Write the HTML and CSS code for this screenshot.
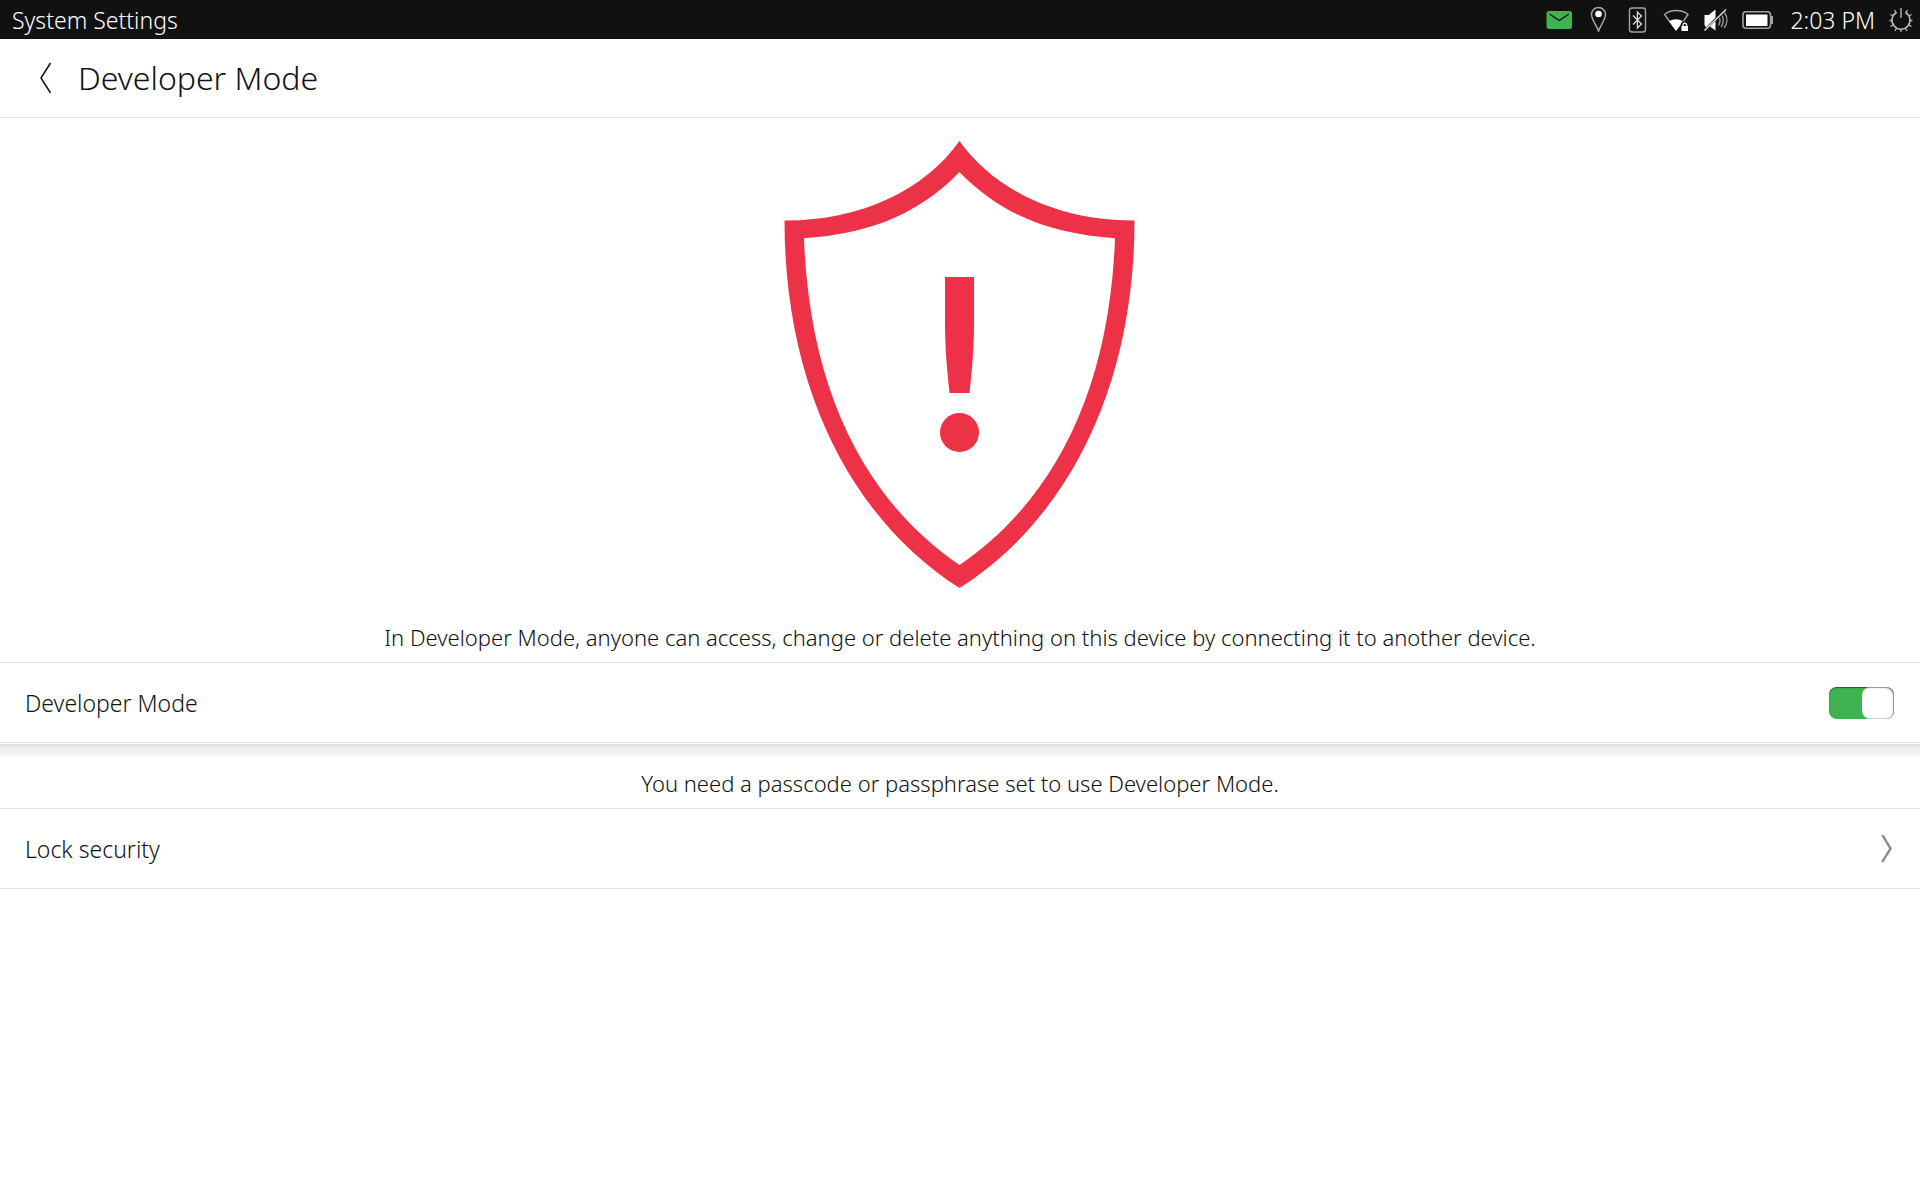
FILE: index.html
```
<!DOCTYPE html>
<html lang="en">
<head>
<meta charset="utf-8">
<meta name="viewport" content="width=device-width, initial-scale=1">
<title>System Settings</title>
<link rel="stylesheet" href="styles.css">
</head>
<body>
<div class="panel">
  <span class="panel-title">System Settings</span>
  <div class="indicators">
    <svg class="indicator" viewBox="0 0 27 39" aria-label="Messages" role="img">
      <rect x="0.500" y="11" width="25.500" height="18" rx="2.500" fill="#3eb34f"/>
      <path d="M3.500 14L13.200 20.500L23 14" fill="none" stroke="#111" stroke-width="1.400"/>
    </svg>
    <svg class="indicator" viewBox="0 0 27 39" aria-label="Location" role="img">
      <path d="M13.500 31.500C12 25.500 6.500 20 6.500 14.500A7 7 0 0 1 20.500 14.500C20.500 20 15 25.500 13.500 31.500Z" fill="none" stroke="#a4a4a4" stroke-width="1.500"/>
      <circle cx="13.500" cy="14" r="3.300" fill="#fff"/>
    </svg>
    <svg class="indicator" viewBox="0 0 27 39" aria-label="Bluetooth" role="img">
      <rect x="5.500" y="8" width="16" height="24" rx="2.500" fill="none" stroke="#a4a4a4" stroke-width="1.400"/>
      <path d="M9 15.500L17.500 24L13.400 28V12L17.500 16L9 24.500" fill="none" stroke="#ddd" stroke-width="1.300"/>
    </svg>
    <svg class="indicator" viewBox="0 0 27 39" aria-label="Wi-Fi" role="img">
      <path d="M7 22L1.500 14.500C8 9.300 18.500 9.300 25 14.500L20.500 21" fill="none" stroke="#a4a4a4" stroke-width="1.500"/>
      <path d="M13 31L6 21.500C10 18.400 16 18.400 20 21.500C18.500 22 17.800 23.500 17.500 25L16.500 26.500Z" fill="#fff"/>
      <rect x="18.500" y="26" width="6.500" height="5" fill="#fff"/>
      <path d="M20 26.500V25A1.800 1.800 0 0 1 23.600 25V26.500" fill="none" stroke="#fff" stroke-width="1.200"/>
    </svg>
    <svg class="indicator" viewBox="0 0 27 39" aria-label="Sound muted" role="img">
      <path d="M2.500 15H6.500L13.500 9.500V17.500L4 27.500L2.500 25ZM13.500 21V30.500L8 26.500Z" fill="#fff"/>
      <path d="M2.500 30.500L24 9.500" stroke="#ddd" stroke-width="1.500"/>
      <path d="M17.500 18C18.300 20 18 23 16.500 25.500M20 15.500C22 19 21.500 24 19 27M22.500 12.500C26 17.500 25.500 23.500 22 28" fill="none" stroke="#999" stroke-width="1.400"/>
    </svg>
    <svg class="indicator battery" viewBox="0 0 33 39" aria-label="Battery full" role="img">
      <rect x="2" y="11.700" width="27.500" height="16.600" rx="3" fill="none" stroke="#a4a4a4" stroke-width="1.600"/>
      <rect x="29.500" y="16" width="2.500" height="8" fill="#a4a4a4"/>
      <rect x="5" y="14.500" width="21.500" height="11.500" fill="#fff"/>
    </svg>
    <time class="clock" datetime="14:03">2:03 PM</time>
    <svg class="indicator" viewBox="0 0 27 39" aria-label="Session" role="img">
      <path d="M9.500 12.500A9 9 0 1 0 18.500 12.500" fill="none" stroke="#bbb" stroke-width="1.500"/>
      <path d="M14 8V18" stroke="#999" stroke-width="1.700"/>
      <path d="M9.500 13L7.500 10M18.500 13L20.500 10M6 16L3.500 14.500M22 16L24.500 14.500M5 20.500H2.500M23 20.500H25.500M6 25L3.500 26.500M22 25L24.500 26.500M9.500 28.300L8 31M18.500 28.300L20 31M14 29.500V32" stroke="#bbb" stroke-width="1.300"/>
    </svg>
  </div>
</div>

<header class="page-header">
  <button class="back" type="button" aria-label="Back">
    <svg class="back-icon" viewBox="0 0 12 32" aria-hidden="true">
      <path d="M10.500 1L1 16L10.500 31" fill="none" stroke="#111" stroke-width="1.500"/>
    </svg>
  </button>
  <h1 class="page-title">Developer Mode</h1>
</header>

<main>
  <svg class="shield" viewBox="0 0 352 447" role="img" aria-label="Warning">
    <path fill-rule="evenodd" d="M175.500 0C140 50 75 80 0.500 79.500C0.500 250 70 380 175.500 447C281 380 350.500 250 350.500 79.500C276 80 211 50 175.500 0ZM175.500 31C221 78 273 93 331 97.300C325 262 261 366 175.500 424C90 366 26 262 20 97.300C78 93 130 78 175.500 31Z"/>
    <path d="M161 136H190V180C190 208 188 228 185.500 252H165.500C163 228 161 208 161 180Z"/>
    <circle cx="175.500" cy="291.500" r="19.500"/>
  </svg>
  <p class="note">In Developer Mode, anyone can access, change or delete anything on this device by connecting it to another device.</p>
  <label class="row" for="developer-mode">
    <span>Developer Mode</span>
    <input class="switch" id="developer-mode" type="checkbox" role="switch" checked>
  </label>
  <div class="divider"></div>
  <p class="note">You need a passcode or passphrase set to use Developer Mode.</p>
  <a class="row" href="#lock-security">
    <span>Lock security</span>
    <svg class="chevron" viewBox="0 0 13 28" aria-hidden="true">
      <path d="M1.300 0L9.500 13.500L1.300 27" fill="none" stroke="#888" stroke-width="2.400"/>
    </svg>
  </a>
</main>
</body>
</html>
```
FILE: styles.css
```
* {
  box-sizing: border-box;
}

body {
  margin: 0;
  background: #fff;
  color: #111;
  font-family: "Noto Sans", "Open Sans", sans-serif;
  font-size: 23px;
  font-weight: 300;
  line-height: 32px;
}

.panel {
  display: flex;
  align-items: center;
  justify-content: space-between;
  height: 39px;
  padding: 0 6px 0 12px;
  background: #111;
  color: #fff;
}

.indicators {
  display: flex;
  align-items: center;
  gap: 12px;
}

.indicator {
  display: block;
  width: 27px;
  height: 39px;
}

.battery {
  width: 33px;
}

.clock {
  margin-left: 4px;
}

.page-header {
  display: flex;
  align-items: center;
  height: 79px;
  padding-left: 28px;
  border-bottom: 1px solid #e2e2e2;
}

.back {
  display: flex;
  align-items: center;
  justify-content: center;
  width: 36px;
  height: 48px;
  padding: 0;
  border: 0;
  background: none;
}

.back-icon {
  width: 12px;
  height: 32px;
}

.page-title {
  margin: 0 0 0 14px;
  font-size: 32px;
  font-weight: 300;
  line-height: 46px;
}

.shield {
  display: block;
  width: 352px;
  height: 447px;
  margin: 23px auto 24px;
  fill: #ed3146;
}

.note {
  margin: 0;
  padding: 10px 16px;
  border-bottom: 1px solid #e2e2e2;
  font-size: 22px;
  line-height: 30px;
  text-align: center;
}

.row {
  display: flex;
  align-items: center;
  justify-content: space-between;
  min-height: 80px;
  padding: 0 26px 0 25px;
  border-bottom: 1px solid #e2e2e2;
  color: inherit;
  text-decoration: none;
}

.switch {
  appearance: none;
  display: flex;
  width: 65px;
  height: 32px;
  margin: 0;
  border-radius: 8px;
  background: #c8c8c8;
  box-shadow: inset 0 1px 1px #00000080;
}

.switch::before {
  content: "";
  width: 32px;
  border-radius: 8px;
  background: #fff;
  box-shadow: inset -1px 1px 1px #00000070, inset 0 -1px 1px #00000030;
}

.switch:checked {
  justify-content: flex-end;
  background: #3eb34f;
}

.divider {
  height: 15px;
  padding-top: 1px;
  background: linear-gradient(#dcdcdc, #eee 4px, #f1f1f1 10px, #fff) content-box;
}

.chevron {
  width: 13px;
  height: 28px;
}
```
